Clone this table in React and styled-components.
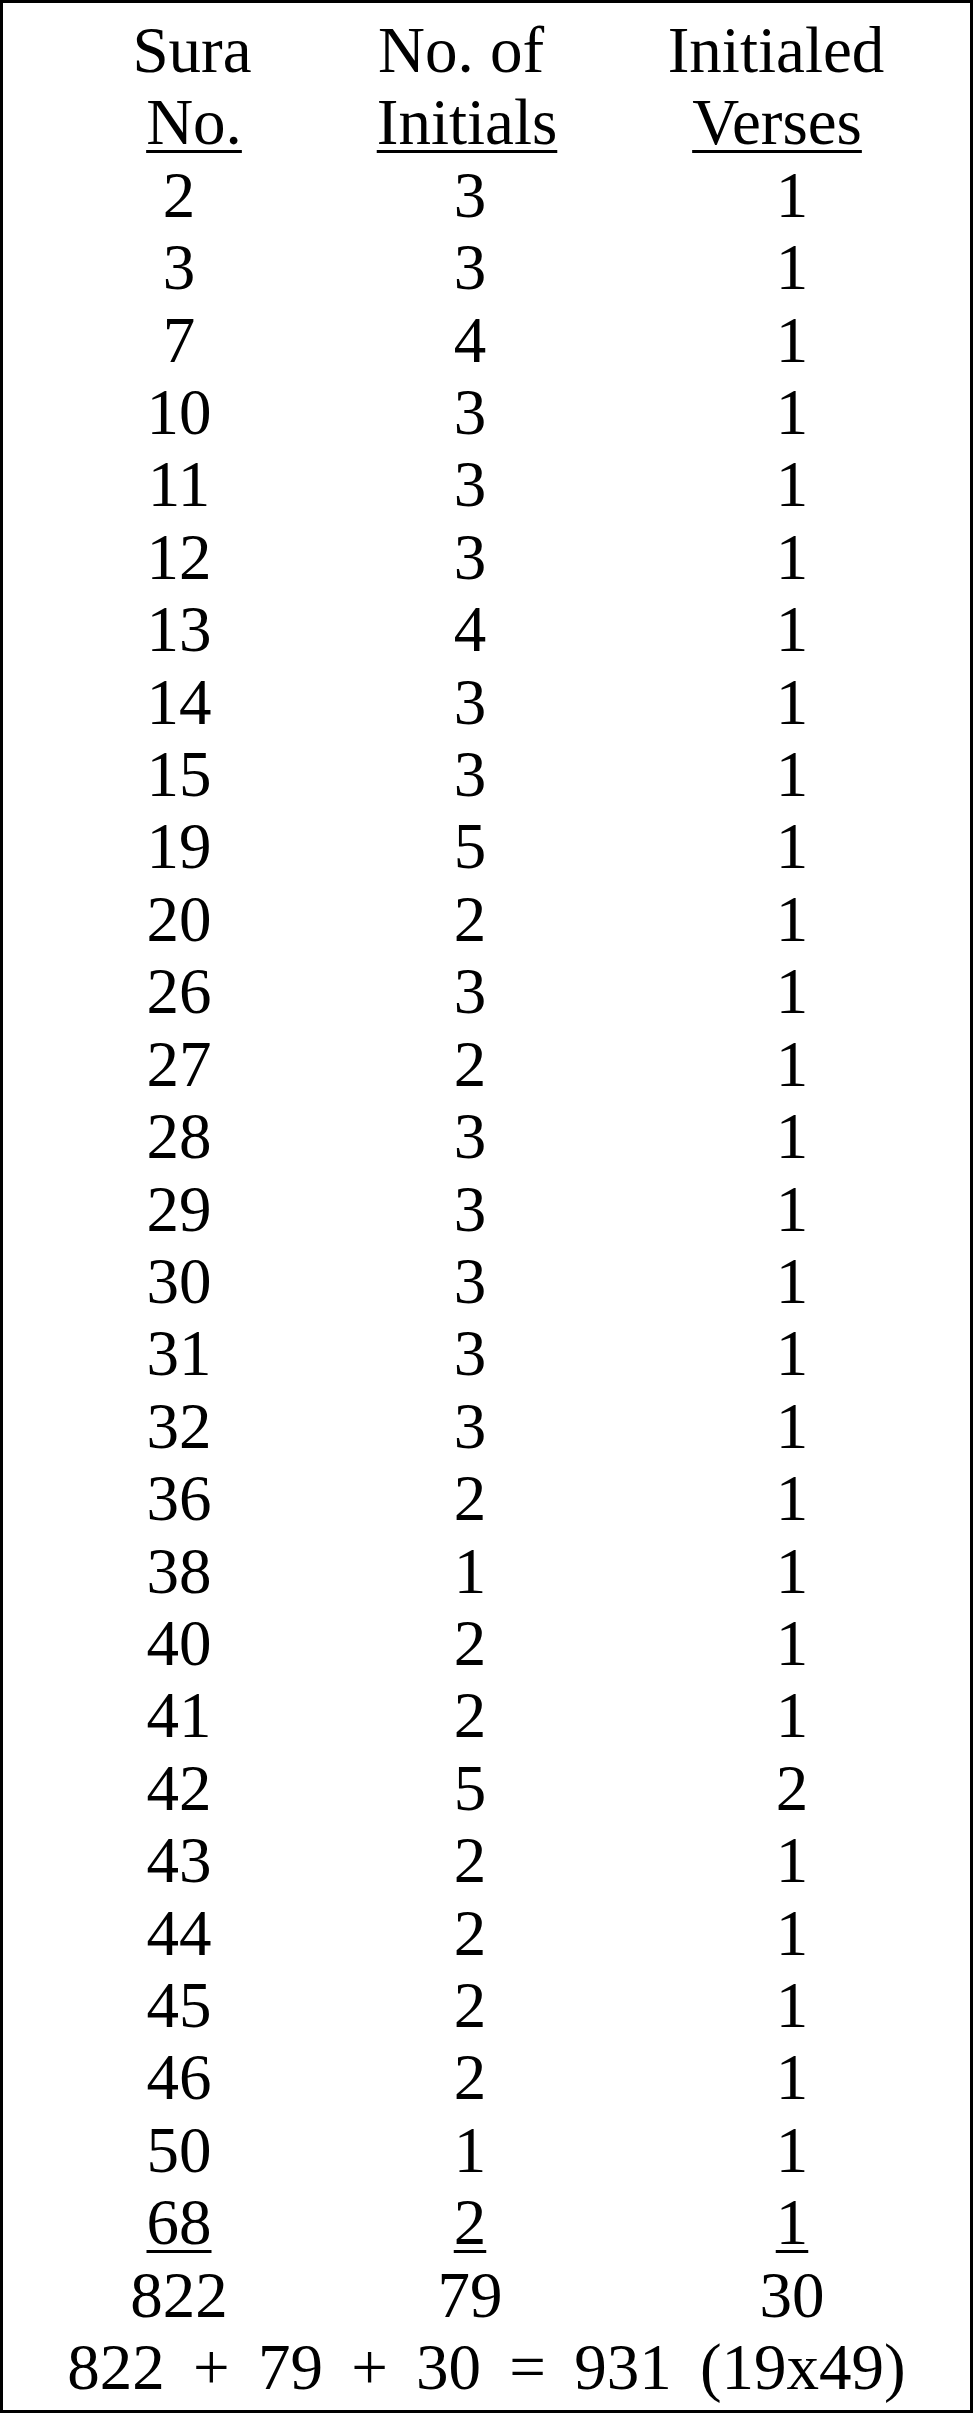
import styled, { createGlobalStyle } from "styled-components";

const GlobalStyle = createGlobalStyle`
    html, body {
        margin: 0;
        padding: 0;
        background: #fff;
    }
`

const rows = [
    [2, 3, 1], [3, 3, 1], [7, 4, 1], [10, 3, 1], [11, 3, 1], [12, 3, 1],
    [13, 4, 1], [14, 3, 1], [15, 3, 1], [19, 5, 1], [20, 2, 1], [26, 3, 1],
    [27, 2, 1], [28, 3, 1], [29, 3, 1], [30, 3, 1], [31, 3, 1], [32, 3, 1],
    [36, 2, 1], [38, 1, 1], [40, 2, 1], [41, 2, 1], [42, 5, 2], [43, 2, 1],
    [44, 2, 1], [45, 2, 1], [46, 2, 1], [50, 1, 1], [68, 2, 1],
]

// header lines: [text, shift of centre in px]
const headTop = [["Sura", 13], ["No. of", -9], ["Initialed", -16]]
const headBottom = [["No.", 15], ["Initials", -3], ["Verses", -15]]

export default function App() {
    return (
        <>
            <GlobalStyle />
            <Frame>
                <Grid>
                    {headTop.map(([text, shift]) => (
                        <HeadCell key={text} $shift={shift}>{text}</HeadCell>
                    ))}
                    {headBottom.map(([text, shift]) => (
                        <HeadCell key={text} $shift={shift}><Under>{text}</Under></HeadCell>
                    ))}

                    {rows.map((row, idx) => {
                        const last = idx === rows.length - 1
                        return row.map((val, c) => (
                            <Cell key={`${idx}-${c}`}>
                                {last ? <Under>{val}</Under> : val}
                            </Cell>
                        ))
                    })}

                    <Cell>822</Cell>
                    <Cell>79</Cell>
                    <Cell>30</Cell>
                </Grid>
                <Equation>822 + 79 + 30 = 931 (19x49)</Equation>
            </Frame>
        </>
    )
}

const Frame = styled.div`
    box-sizing: border-box;
    width: 973px;
    height: 2413px;
    border: 3px solid #000;
    padding-top: 11px;
    background: #fff;
    color: #000;
    font-family: "Liberation Serif", "Times New Roman", serif;
    font-size: 65px;
    line-height: 72.4px;
`

const Grid = styled.div`
    display: grid;
    grid-template-columns: 272px 310px 334px;
    padding-left: 40px;
`

const Cell = styled.div`
    text-align: center;
    white-space: nowrap;
`

const HeadCell = styled(Cell)`
    padding-left: ${p => (p.$shift > 0 ? p.$shift * 2 : 0)}px;
    padding-right: ${p => (p.$shift < 0 ? -p.$shift * 2 : 0)}px;
`

const Under = styled.span`
    text-decoration: underline;
    text-decoration-thickness: 2.5px;
    text-underline-offset: 6px;
`

const Equation = styled.div`
    text-align: center;
    white-space: nowrap;
    word-spacing: 12px;
`
